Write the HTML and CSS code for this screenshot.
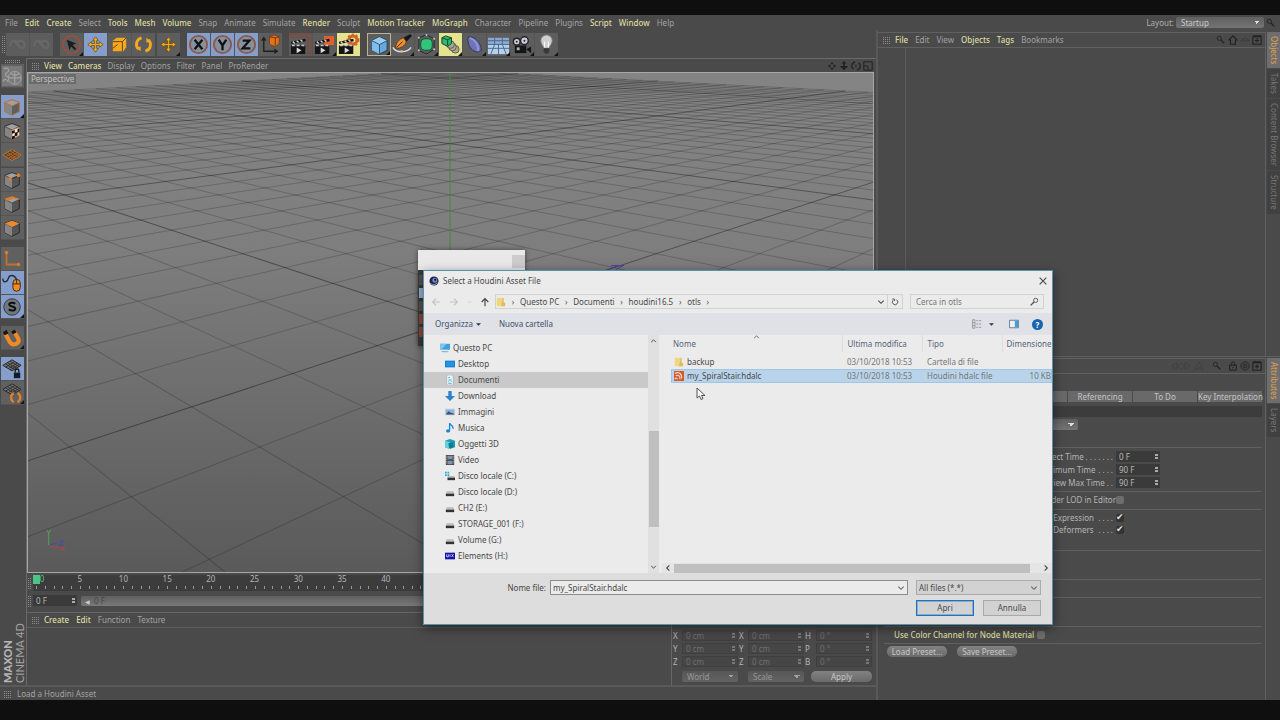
FILE: index.html
```html
<!DOCTYPE html>
<html lang="en">
<head>
<meta charset="utf-8">
<title>Cinema 4D</title>
<link rel="stylesheet" href="styles.css">
</head>
<body>
<svg class="defs" aria-hidden="true">
  <defs>
    <symbol id="i-undo" viewBox="0 0 24 24"><path d="M5 14a4 4 0 1 1 7 0M8 8l8 8M12 10a4 4 0 1 1 4 6" fill="none" stroke="#696969" stroke-width="2"/></symbol>
    <symbol id="i-select" viewBox="0 0 24 24"><circle cx="12" cy="12" r="9" fill="none" stroke="#9a4f3c" stroke-width="2"/><path d="M7 7l10 4-4 1.500 4 4-1.500 1.500-4-4L10 18z" fill="#1c1c1c"/></symbol>
    <symbol id="i-move" viewBox="0 0 24 24"><path d="M12 4l3 4h-2v3h3V9l4 3-4 3v-2h-3v3h2l-3 4-3-4h2v-3H8v2l-4-3 4-3v2h3V8H9z" fill="#f2a91f" stroke="#5a4110" stroke-width=".7"/></symbol>
    <symbol id="i-scale" viewBox="0 0 24 24"><path d="M5 8l4-3h10v10l-3 4H5z" fill="#f4a81d"/><path d="M5 9h10v10M15 9l4-4M5 16l5-4" fill="none" stroke="#60430d"/></symbol>
    <symbol id="i-rotate" viewBox="0 0 24 24"><path d="M10 5a7 7 0 0 0-3 12M14 19a7 7 0 0 0 3-12" fill="none" stroke="#f2a91f" stroke-width="3"/><path d="M4 15l5-1v5zM20 9l-5 1V5z" fill="#f2a91f"/></symbol>
    <symbol id="i-x" viewBox="0 0 24 24"><circle cx="12" cy="12" r="9" fill="#87909f" stroke="#8a5b4c" stroke-width="2"/><path d="M8 7l8 10M16 7L8 17" stroke="#111" stroke-width="2.4"/></symbol>
    <symbol id="i-y" viewBox="0 0 24 24"><circle cx="12" cy="12" r="9" fill="#87909f" stroke="#8a5b4c" stroke-width="2"/><path d="M8 7l4 6 4-6M12 12v6" stroke="#111" stroke-width="2.4" fill="none"/></symbol>
    <symbol id="i-z" viewBox="0 0 24 24"><circle cx="12" cy="12" r="9" fill="#87909f" stroke="#8a5b4c" stroke-width="2"/><path d="M8 8h7l-7 8h8" stroke="#111" stroke-width="2.4" fill="none"/></symbol>
    <symbol id="i-axis" viewBox="0 0 24 24"><path d="M5 6v13h13M3 8l2-3 2 3M16 17l3 2-3 2" fill="none" stroke="#1f1f1f" stroke-width="1.4"/><path d="M11 4l5-2 5 2v7l-4 3-6-2z" fill="#e27418" stroke="#6b3510" stroke-width=".7"/><path d="M11 4l6 1 4-1M17 5v8" stroke="#6b3510" fill="none"/></symbol>
    <symbol id="i-clap" viewBox="0 0 24 24"><path d="M2 13h15v9H2zM2 9l15-3 .5 2.500-15 3z" fill="#151515"/><path d="M4 9l2 2M8 8l2 2M12 7l2 2M3 13h3M8 13h3M13 13h3" stroke="#ccc" stroke-width="1.500"/><path d="M8 15l5 3-5 3z" fill="#ddd"/></symbol>
    <symbol id="i-cube3d" viewBox="0 0 24 24"><path d="M12 3l8 4v10l-8 4-8-4V7z" fill="#68a8dc" stroke="#1d3b58"/><path d="M4 7l8 4v10l-8-4z" fill="#82bdea"/><path d="M4 7l8-4 8 4-8 4z" fill="#9accee"/><path d="M4 7l8 4 8-4M12 11v10" stroke="#1d3b58" fill="none" stroke-width=".8"/></symbol>
    <symbol id="i-pen" viewBox="0 0 24 24"><path d="M13 5l7-4 2 2-6 6z" fill="#191919"/><path d="M5 15c0-5 4-9 8-10l3 4c-1 4-6 7-10 7z" fill="#ef9132" stroke="#5a2c0b" stroke-width=".8"/><path d="M6 15l6-6" stroke="#401f08"/><path d="M2 15c3 6 15 6 19 0" fill="none" stroke="#ddd" stroke-width="1.500"/><circle cx="11" cy="19" r="1.200" fill="#f0c040"/></symbol>
    <symbol id="i-nurbs" viewBox="0 0 24 24"><path d="M4 5l8-3 8 4v11l-8 5-8-4z" fill="none" stroke="#282828"/><rect x="6" y="6" width="12" height="12" rx="4" fill="#31c47a" stroke="#115232"/><g fill="#ccc"><circle cx="4" cy="5" r="1"/><circle cx="12" cy="2" r="1"/><circle cx="20" cy="6" r="1"/><circle cx="4" cy="18" r="1"/><circle cx="20" cy="17" r="1"/></g></symbol>
    <symbol id="i-array" viewBox="0 0 24 24"><g fill="#a9a98e" stroke="#5b5b50"><circle cx="17" cy="17" r="4"/><circle cx="14" cy="14.500" r="4"/><circle cx="12" cy="12" r="4"/></g><path d="M3 5l4-2 6 2v6l-4 3-6-3z" fill="#2fb873" stroke="#0d4427"/><path d="M3 5l6 2 4-2M9 7v6" stroke="#0d4427" fill="none"/></symbol>
    <symbol id="i-deform" viewBox="0 0 24 24"><path d="M6 4c8 0 13 7 13 14l-4 2C8 19 5 12 5 6z" fill="#6f74b8" stroke="#30335e"/><path d="M7 5c6 2 9 8 9 14" stroke="#9297d8" stroke-width="2" fill="none"/></symbol>
    <symbol id="i-floor" viewBox="0 0 24 24"><path d="M1 5h22v17H1z" fill="#8ca6cc"/><path d="M1 12h22v10H1z" fill="#b6d0ea"/><path d="M1 12h22M1 16h22M8 12L4 22M12 12v10M16 12l4 10M8 5v7M16 5v7M1 8h22" stroke="#49688f"/></symbol>
    <symbol id="i-cam" viewBox="0 0 24 24"><rect x="4" y="13" width="12" height="8" fill="#151515"/><path d="M16 17l5-3v7z" fill="#151515"/><circle cx="6" cy="9" r="3.500" fill="#ccd" stroke="#222" stroke-width="1.500"/><circle cx="14" cy="8" r="4" fill="#ccd" stroke="#222" stroke-width="1.500"/><circle cx="14" cy="8" r="1" fill="#222"/><circle cx="6" cy="9" r="1" fill="#222"/><path d="M6 15h3v3H6z" fill="#9bb"/></symbol>
    <symbol id="i-light" viewBox="0 0 24 24"><path d="M9 16c0-3-3-4-3-8a6 6 0 0 1 12 0c0 4-3 5-3 8z" fill="#cfcfcf" stroke="#777"/><path d="M9 16h6v4l-3 2-3-2z" fill="#393939"/><path d="M10 15V9M14 15V9" stroke="#fff"/></symbol>
    <symbol id="i-globe" viewBox="0 0 24 24"><path d="M1 1h22v22H1z" fill="#7a7a7a"/><circle cx="15" cy="14" r="7" fill="none" stroke="#a5a5a5"/><path d="M8 14h14M15 7v14M10 9c4 3 7 3 10 0M3 4c5-2 7 2 4 4s-3 4 1 5M2 18c2-4 5-2 6 1" fill="none" stroke="#a2a2a2" stroke-width="1.300"/></symbol>
    <symbol id="i-model" viewBox="0 0 24 24"><path d="M12 4l8 3v10l-8 4-8-4V7z" fill="#5f5f5f" stroke="#c06d2d"/><path d="M4 7l8 4v10l-8-4z" fill="#858585"/><path d="M4 7l8-3 8 3-8 4z" fill="#a0a0a0" stroke="#c06d2d" stroke-width=".8"/></symbol>
    <symbol id="i-grey" viewBox="0 0 24 24"><path d="M12 4l8 3v10l-8 4-8-4V7z" fill="#555" stroke="#252525"/><path d="M4 7l8 4v10l-8-4z" fill="#858585"/><path d="M4 7l8-3 8 3-8 4z" fill="#a0a0a0" stroke="#333" stroke-width=".7"/></symbol>
    <symbol id="i-check" viewBox="0 0 24 24"><use href="#i-grey"/><path d="M12 11l8-3v9l-8 4z" fill="#eee" stroke="#cf7b35"/><path d="M12 12l3-1v3l-3 1zM15 14l3-1v-3l2-1v4l-2 1v3l-3 1zM12 18l3-1v3l-3 1z" fill="#111"/></symbol>
    <symbol id="i-mesh" viewBox="0 0 24 24"><path d="M2 12l10-6 10 6-10 6z" fill="#4d3a28" stroke="#c9762c"/><path d="M5 10.500l10 6M7 9l10 6M10 7.500l10 6M5 14l10-6M8 15.500l10-6M10 17l10-6" stroke="#c9762c" stroke-width=".8"/></symbol>
    <symbol id="i-mesh2" viewBox="0 0 24 24"><path d="M2 8l10-6 10 6-10 6z" fill="#777" stroke="#252525"/><path d="M5 6.500l10 6M7 5l10 6M10 3.500l10 6M5 10l10-6M8 11.500l10-6M10 13l10-6" stroke="#252525" stroke-width=".9"/></symbol>
    <symbol id="i-point" viewBox="0 0 24 24"><use href="#i-grey"/><path d="M10 11l10-4" stroke="#222"/><g fill="#e17d25"><circle cx="10" cy="11" r="2"/><circle cx="19" cy="7" r="2"/></g></symbol>
    <symbol id="i-edge" viewBox="0 0 24 24"><use href="#i-grey"/><path d="M4 7l8-3 8 3M6 8l8-3" stroke="#e17d25" fill="none" stroke-width="1.500"/></symbol>
    <symbol id="i-poly" viewBox="0 0 24 24"><use href="#i-grey"/><path d="M4 7l8-3 8 3-8 4z" fill="#ef8a2b"/></symbol>
    <symbol id="i-l" viewBox="0 0 24 24"><path d="M6 5v13h13" stroke="#c66f2b" stroke-width="2" fill="none"/><circle cx="6" cy="5" r="2" fill="#d37a31"/><circle cx="19" cy="18" r="2" fill="#d37a31"/></symbol>
    <symbol id="i-mouse" viewBox="0 0 24 24"><rect x="13" y="8" width="8" height="13" rx="4" fill="#f08a22" stroke="#3b2610"/><path d="M13 13h8M17 8v5" stroke="#3b2610"/><path d="M2 7c0 6 5 4 6 0s6-5 9 1" fill="none" stroke="#262e38" stroke-width="1.500"/></symbol>
    <symbol id="i-s" viewBox="0 0 24 24"><circle cx="12" cy="12" r="9" fill="#717780" stroke="#333"/><path d="M15.500 8.500c-2-2-7-1.500-6.500 1 .5 2.500 7 1.500 6.500 4.500-.4 2.500-5 2.500-7 .5" fill="none" stroke="#111" stroke-width="2.200"/></symbol>
    <symbol id="i-magnet" viewBox="0 0 24 24"><path d="M5 8l5 9c3 4 11 1 9-4l-4-7" fill="none" stroke="#f08a22" stroke-width="4.500"/><path d="M2 6l4-3 2 4-4 2zM11 5l4-2 2 3-4 2z" fill="#161616"/></symbol>
    <symbol id="i-lock" viewBox="0 0 24 24"><use href="#i-mesh2"/><path d="M14 16h7v6h-7z" fill="#141b28"/><path d="M15.500 16v-2a2 2 0 0 1 4 0v2" fill="none" stroke="#141b28" stroke-width="1.400"/></symbol>
    <symbol id="i-ring" viewBox="0 0 24 24"><use href="#i-mesh2"/><path d="M14 12c-4 2-4 8 0 10M18 12c4 2 4 8 0 10" fill="none" stroke="#e3812d" stroke-width="2.500"/></symbol>
    <symbol id="i-lens" viewBox="0 0 12 12"><circle cx="4" cy="4" r="2.500" fill="none" stroke="currentColor"/><path d="M6 6l4 4" stroke="currentColor" stroke-width="1.500"/></symbol>
    <symbol id="i-home" viewBox="0 0 12 12"><path d="M1 6l5-5 5 5H9v5H3V6z" fill="none" stroke="currentColor" stroke-width="1.300"/></symbol>
    <symbol id="i-eye" viewBox="0 0 12 12"><path d="M1 7c3-4 7-4 10 0z" fill="none" stroke="currentColor" opacity=".4"/></symbol>
    <symbol id="i-cone" viewBox="0 0 12 12"><path d="M6 1l5 10-5-3-5 3z" fill="none" stroke="currentColor"/></symbol>
    <symbol id="i-look" viewBox="0 0 24 12"><path d="M1 6l6-4v8zM23 6l-6-4v8zM8 6c2-4 6-4 8 0-2 4-6 4-8 0z" fill="none" stroke="currentColor"/></symbol>
    <symbol id="i-plus" viewBox="0 0 12 12"><path d="M1 2h10v9H1zM1 1h10M6 4v5M3.500 6.500h5" fill="none" stroke="currentColor" stroke-width="1.300"/></symbol>
    <symbol id="i-pan" viewBox="0 0 12 12"><path d="M6 1l2 3H4zM6 11l2-3H4zM1 6l3-2v4zM11 6L8 4v4z" fill="currentColor"/></symbol>
    <symbol id="i-zoomv" viewBox="0 0 12 12"><path d="M6 0l3 3H7v3h4L6 11 1 6h4V3H3z" fill="currentColor"/></symbol>
    <symbol id="i-orbit" viewBox="0 0 12 12"><path d="M5 1a5 5 0 0 0-2 9M7 11a5 5 0 0 0 2-9" fill="none" stroke="currentColor" stroke-width="1.500"/><path d="M6 4v4" stroke="currentColor"/></symbol>
    <symbol id="i-quad" viewBox="0 0 12 12"><path d="M1 1h10v10H1zM1 6h5v5" fill="none" stroke="currentColor" stroke-width="1.200"/></symbol>
    <symbol id="i-padlock" viewBox="0 0 12 12"><path d="M2 5h8v6H2zM4 5V3a2 2 0 0 1 4 0v2M6 7v2" fill="none" stroke="currentColor" stroke-width="1.200"/></symbol>
    <symbol id="i-target" viewBox="0 0 12 12"><circle cx="6" cy="6" r="5" fill="none" stroke="currentColor"/><circle cx="6" cy="6" r="2.500" fill="none" stroke="currentColor"/><circle cx="6" cy="6" r="1" fill="currentColor"/></symbol>
    <symbol id="i-folder" viewBox="0 0 12 12"><path d="M1 1h8v10H1z" fill="#f0d67c"/><path d="M8 1h1v6h2v4H6z" fill="#dcbd5c"/></symbol>
    <symbol id="i-pc" viewBox="0 0 12 12"><path d="M0 1h12v7H0z" fill="#3fa0dc"/><path d="M0 1h8L2 8H0z" fill="#7cc4ee"/><path d="M2 10h8v1H2z" fill="#6a9ab5"/></symbol>
    <symbol id="i-desktop" viewBox="0 0 12 12"><path d="M0 2h12v8H0z" fill="#1778c6"/><path d="M1 3h10v6H1z" fill="#1e96e6"/></symbol>
    <symbol id="i-doc" viewBox="0 0 12 12"><path d="M2 0h6l2 2v10H2z" fill="#eef5f8" stroke="#8aa3ad" stroke-width=".7"/><path d="M4 3h2M4 6h4M4 8h1M7 8h1M4 10h4" stroke="#38a0c8"/></symbol>
    <symbol id="i-down" viewBox="0 0 12 12"><path d="M4 0h4v6h4l-6 6-6-6h4z" fill="#2f83cc"/></symbol>
    <symbol id="i-pic" viewBox="0 0 12 12"><path d="M0 2h12v8H0z" fill="#c5d3de"/><path d="M1 3h10v6H1z" fill="#8fb6d8"/><path d="M1 9l3-4 3 2 4 1v1z" fill="#34527a"/></symbol>
    <symbol id="i-music" viewBox="0 0 12 12"><path d="M5.500 0c1 3 5 3 4 7M5.500 0v9" stroke="#1687d3" fill="none" stroke-width="1.500"/><ellipse cx="3.700" cy="9.500" rx="2.500" ry="2" fill="#1687d3"/></symbol>
    <symbol id="i-3d" viewBox="0 0 12 12"><path d="M0 2l6-2 6 2v8l-6 2-6-2z" fill="#1aa0b4"/><path d="M0 2l6 2v8l-6-2z" fill="#63d0de"/><path d="M4 5l6-1v6l-5 1z" fill="#117a92"/></symbol>
    <symbol id="i-video" viewBox="0 0 12 12"><path d="M1 0h10v12H1z" fill="#444"/><path d="M3 1h6v4H3zM3 7h6v4H3z" fill="#7f93ac"/><path d="M2 1v10M10 1v10" stroke="#ccc" stroke-dasharray="1 1"/></symbol>
    <symbol id="i-disk" viewBox="0 0 12 12"><path d="M2 5h8l1 3H1z" fill="#bbb"/><path d="M1 8h10v3H1z" fill="#333"/></symbol>
    <symbol id="i-diskc" viewBox="0 0 12 12"><path d="M3 6h8l1 2H3z" fill="#bbb"/><path d="M3 8h9v3H3z" fill="#333"/><path d="M0 1h2v2H0zM3 1h2v2H3zM0 4h2v2H0zM3 4h2v2H3z" fill="#21a8dc"/></symbol>
    <symbol id="i-wd" viewBox="0 0 12 12"><path d="M0 2h12v8H0z" fill="#1414a6"/><path d="M2 4v3h2V4M6 4v3M8 4l2 3M10 4L8 7" stroke="#dcdcff" fill="none"/></symbol>
    <symbol id="i-houdini" viewBox="0 0 12 12"><path d="M0 0h12v12H0z" fill="#d9592b"/><path d="M1 3c5-3 9 1 8 6M2 6c3-2 6 0 5 4M1 10c0-2 3-2 3 0" fill="none" stroke="#f4d6c8" stroke-width="1.300"/></symbol>
    <symbol id="i-c4d" viewBox="0 0 12 12"><circle cx="6" cy="6" r="5.500" fill="#20264f"/><circle cx="7" cy="5" r="3" fill="#7183b8"/><circle cx="7.500" cy="4.500" r="1.300" fill="#10132c"/><path d="M1 8c2 3 7 3 9 0" stroke="#aeb9d9" fill="none"/></symbol>
    <symbol id="i-chev" viewBox="0 0 12 12"><path d="M2 4l4 4 4-4" fill="none" stroke="currentColor" stroke-width="1.600"/></symbol>
    <symbol id="i-tri" viewBox="0 0 12 12"><path d="M0 3h12L6 9z" fill="currentColor"/></symbol>
    <symbol id="i-back" viewBox="0 0 12 12"><path d="M11 6H2M6 2L2 6l4 4" fill="none" stroke="currentColor" stroke-width="1.400"/></symbol>
    <symbol id="i-refresh" viewBox="0 0 12 12"><path d="M8 2.500a4 4 0 1 1-5 1M2 1.500h3v3" fill="none" stroke="currentColor" stroke-width="1.400"/></symbol>
    <symbol id="i-close" viewBox="0 0 12 12"><path d="M2 2l8 8M10 2l-8 8" stroke="currentColor" stroke-width="1.300"/></symbol>
    <symbol id="i-list" viewBox="0 0 12 12"><path d="M.5 1h3v10h-3zM.5 4.500h3M.5 8h3M5 2h2M8 2h3M5 6h2M8 6h3M5 10h2M8 10h3" fill="none" stroke="#8a8d93"/></symbol>
    <symbol id="i-pane" viewBox="0 0 12 12"><path d="M.5 1.500h11v9H.5z" fill="#eee" stroke="#4c6b8c"/><path d="M7 2h4v8H7z" fill="#4f9bd8"/></symbol>
  </defs>
</svg>

<main class="app">
  <header class="menubar">
    <nav class="menu">
      <button>File</button><button class="on">Edit</button><button class="on">Create</button><button>Select</button><button class="on">Tools</button><button class="on">Mesh</button><button class="on">Volume</button><button>Snap</button><button>Animate</button><button>Simulate</button><button class="on">Render</button><button>Sculpt</button><button class="on">Motion Tracker</button><button class="on">MoGraph</button><button>Character</button><button>Pipeline</button><button>Plugins</button><button class="on">Script</button><button class="on">Window</button><button>Help</button>
    </nav>
    <div class="layout-pick">
      <label for="layout">Layout:</label>
      <select id="layout" class="combo"><option>Startup</option></select>
      <svg class="ic"><use href="#i-lens"/></svg>
    </div>
  </header>

  <div class="main">
    <section class="left">
      <div class="toolbar">
        <span class="grip tall"></span>
        <div class="group"><button aria-label="Undo"><svg><use href="#i-undo"/></svg></button><button aria-label="Redo"><svg><use href="#i-undo"/></svg></button></div>
        <div class="group"><button class="more" aria-label="Live selection"><svg><use href="#i-select"/></svg></button><button class="sel" aria-label="Move"><svg><use href="#i-move"/></svg></button><button aria-label="Scale"><svg><use href="#i-scale"/></svg></button><button aria-label="Rotate"><svg><use href="#i-rotate"/></svg></button></div>
        <div class="group near"><button class="more" aria-label="Last tool"><svg><use href="#i-move"/></svg></button></div>
        <div class="group"><button class="sel" aria-label="X axis"><svg><use href="#i-x"/></svg></button><button class="sel" aria-label="Y axis"><svg><use href="#i-y"/></svg></button><button class="sel" aria-label="Z axis"><svg><use href="#i-z"/></svg></button><button aria-label="Coordinate system"><svg><use href="#i-axis"/></svg></button></div>
        <div class="group"><button aria-label="Render view"><svg><path d="M1 1h21v20h-3V4H1z" fill="none" stroke="#8b4335"/><use href="#i-clap"/></svg></button><button class="more" aria-label="Render to picture viewer"><svg><path d="M11 3h10v9H11z" fill="#e2602c"/><use href="#i-clap"/></svg></button><button class="yel" aria-label="Render settings"><svg><circle cx="16" cy="7" r="4" fill="none" stroke="#cf6328" stroke-width="3"/><circle cx="16" cy="7" r="5.500" fill="none" stroke="#cf6328" stroke-width="2" stroke-dasharray="2 2"/><use href="#i-clap"/></svg></button></div>
        <div class="group"><button class="more framed" aria-label="Cube"><svg><use href="#i-cube3d"/></svg></button><button class="more" aria-label="Pen"><svg><use href="#i-pen"/></svg></button><button class="more" aria-label="Subdivision surface"><svg><use href="#i-nurbs"/></svg></button><button class="more yel" aria-label="Array"><svg><use href="#i-array"/></svg></button><button class="more" aria-label="Bend"><svg><use href="#i-deform"/></svg></button><button class="more" aria-label="Floor"><svg><use href="#i-floor"/></svg></button><button class="more" aria-label="Camera"><svg><use href="#i-cam"/></svg></button><button class="more" aria-label="Light"><svg><use href="#i-light"/></svg></button></div>
      </div>

      <div class="work">
        <aside class="palette">
          <span class="grip wide"></span>
          <div class="vgroup"><button aria-label="Make editable"><svg><use href="#i-globe"/></svg></button></div>
          <div class="vgroup gap-l"><button class="sel more" aria-label="Model"><svg><use href="#i-model"/></svg></button><button aria-label="Texture"><svg><use href="#i-check"/></svg></button><button aria-label="Workplane"><svg><use href="#i-mesh"/></svg></button></div>
          <div class="vgroup gap-s"><button aria-label="Points"><svg><use href="#i-point"/></svg></button><button aria-label="Edges"><svg><use href="#i-edge"/></svg></button><button aria-label="Polygons"><svg><use href="#i-poly"/></svg></button></div>
          <div class="vgroup gap-l"><button aria-label="Axis"><svg><use href="#i-l"/></svg></button><button class="sel" aria-label="Tweak"><svg><use href="#i-mouse"/></svg></button><button class="sel more" aria-label="Viewport solo"><svg><use href="#i-s"/></svg></button></div>
          <div class="vgroup gap-l"><button class="more" aria-label="Snap"><svg><use href="#i-magnet"/></svg></button></div>
          <div class="vgroup gap-l"><button class="sel" aria-label="Lock workplane"><svg><use href="#i-lock"/></svg></button><button class="more" aria-label="Planar workplane"><svg><use href="#i-ring"/></svg></button></div>
          <div class="brand"><b>MAXON</b><span>CINEMA 4D</span></div>
        </aside>

        <div class="center">
          <div class="bar view-bar">
            <span class="grip"></span>
            <nav class="menu"><button class="on">View</button><button class="on">Cameras</button><button>Display</button><button>Options</button><button>Filter</button><button>Panel</button><button>ProRender</button></nav>
            <div class="icons"><svg class="ic"><use href="#i-pan"/></svg><svg class="ic"><use href="#i-zoomv"/></svg><svg class="ic"><use href="#i-orbit"/></svg><svg class="ic"><use href="#i-quad"/></svg></div>
          </div>
          <div class="viewport">
            <svg class="scene" viewBox="0 0 846 498" preserveAspectRatio="xMidYMin slice">
              <g id="grid"></g>
              <path d="M422.500 0v300" stroke="#478547"/>
              <path d="M576 198l14-6M583 192h13l-8 4" stroke="#4444a8" fill="none"/>
              <g fill="none"><path d="M22 471v-13" stroke="#4aa552"/><path d="M20 456l2 3 2-3" stroke="#4aa552"/><path d="M23 471l8-2M33 467h4l-4 4h4" stroke="#4a4aa8"/><path d="M23 472l9 2M34 473l4 4M38 473l-4 4" stroke="#b04545"/></g>
            </svg>
            <span class="view-name">Perspective</span>
          </div>
          <div class="timeline"><span class="grip"></span>
            <div class="ruler"><i class="playhead"></i><div class="marks" id="marks"></div></div>
          </div>
          <div class="range"><span class="grip"></span>
            <span class="spin"><input aria-label="Start frame" value="0 F"></span>
            <div class="slider"><i>◀</i>0 F</div>
          </div>
          <div class="lower">
            <div class="materials">
              <div class="bar"><span class="grip"></span><nav class="menu"><button class="on">Create</button><button class="on">Edit</button><button>Function</button><button>Texture</button></nav></div>
            </div>
            <div class="coords">
              <label for="px">X</label><span class="spin"><input id="px" value="0 cm"></span><label for="sx">X</label><span class="spin"><input id="sx" value="0 cm"></span><label for="rh">H</label><span class="spin"><input id="rh" value="0 °"></span>
              <label for="py">Y</label><span class="spin"><input id="py" value="0 cm"></span><label for="sy">Y</label><span class="spin"><input id="sy" value="0 cm"></span><label for="rp">P</label><span class="spin"><input id="rp" value="0 °"></span>
              <label for="pz">Z</label><span class="spin"><input id="pz" value="0 cm"></span><label for="sz">Z</label><span class="spin"><input id="sz" value="0 cm"></span><label for="rb">B</label><span class="spin"><input id="rb" value="0 °"></span>
              <select class="combo c2" aria-label="Space"><option>World</option></select><select class="combo c4" aria-label="Size mode"><option>Scale</option></select><button class="pill c6">Apply</button>
            </div>
          </div>
        </div>
      </div>
      <footer class="status"><span class="grip"></span>Load a Houdini Asset</footer>
    </section>

    <section class="right">
      <div class="pane objects">
        <div class="pane-main">
          <div class="bar"><span class="grip"></span><nav class="menu"><button class="on">File</button><button>Edit</button><button>View</button><button class="on">Objects</button><button class="on">Tags</button><button>Bookmarks</button></nav>
            <div class="icons"><svg class="ic"><use href="#i-lens"/></svg><svg class="ic"><use href="#i-home"/></svg><svg class="ic"><use href="#i-eye"/></svg><svg class="ic"><use href="#i-plus"/></svg></div></div>
          <div class="tree-area"></div>
        </div>
        <div class="vtabs"><button class="cur">Objects</button><button>Takes</button><button>Content Browser</button><button>Structure</button></div>
      </div>
      <div class="pane attrs">
        <div class="pane-main">
          <div class="bar"><div class="icons"><svg class="ic look faint"><use href="#i-look"/></svg><svg class="ic faint cone"><use href="#i-cone"/></svg><svg class="ic"><use href="#i-lens"/></svg><svg class="ic lockic"><use href="#i-padlock"/></svg><svg class="ic"><use href="#i-target"/></svg><svg class="ic"><use href="#i-plus"/></svg></div></div>
          <div class="tabs"><button>Dynamics</button><button>Referencing</button><button>To Do</button><button>Key Interpolation</button></div>
          <div class="strip"></div>
          <div class="unit"><select class="combo" aria-label="Unit"><option>Centimeters</option></select></div>
          <div class="sect fields">
            <label for="t1"><span>Project Time</span></label><span class="spin"><input id="t1" value="0 F"></span>
            <label for="t2"><span>Maximum Time</span></label><span class="spin"><input id="t2" value="90 F"></span>
            <label for="t3"><span>Preview Max Time</span></label><span class="spin"><input id="t3" value="90 F"></span>
          </div>
          <div class="sect lod fields"><label for="k1"><span>Render LOD in Editor</span></label><input type="checkbox" id="k1"></div>
          <div class="sect uses fields"><label for="k2"><span>Use Expression</span></label><input type="checkbox" id="k2" checked><label for="k3"><span>Use Deformers</span></label><input type="checkbox" id="k3" checked></div>
          <div class="sect s1"></div><div class="sect s2"></div><div class="sect s1"></div>
          <div class="sect node"><label class="on" for="k4">Use Color Channel for Node Material</label><input type="checkbox" id="k4"></div>
          <div class="sect presets"><button class="pill">Load Preset...</button><button class="pill">Save Preset...</button></div>
        </div>
        <div class="vtabs"><button class="cur">Attributes</button><button>Layers</button></div>
      </div>
    </section>
  </div>
</main>

<div class="mini"><div class="mini-title"><span></span></div><div class="mini-body"><i></i><i class="lit"></i><i></i><i class="red"></i><i class="red"></i></div></div>

<div class="dialog" role="dialog" aria-label="Select a Houdini Asset File">
  <div class="d-title"><svg class="ic"><use href="#i-c4d"/></svg><span>Select a Houdini Asset File</span><button aria-label="Close"><svg class="ic"><use href="#i-close"/></svg></button></div>
  <div class="d-nav">
    <div class="arrows"><svg class="ic off"><use href="#i-back"/></svg><svg class="ic off flip"><use href="#i-back"/></svg><svg class="ic off tiny"><use href="#i-chev"/></svg><svg class="ic up"><use href="#i-back"/></svg></div>
    <div class="path"><svg class="ic"><use href="#i-folder"/></svg><i>›</i><a href="#">Questo PC</a><i>›</i><a href="#">Documenti</a><i>›</i><a href="#">houdini16.5</a><i>›</i><a href="#">otls</a><i>›</i><svg class="ic drop"><use href="#i-chev"/></svg><button aria-label="Refresh"><svg class="ic"><use href="#i-refresh"/></svg></button></div>
    <div class="search"><input type="text" placeholder="Cerca in otls" aria-label="Cerca in otls"><svg class="ic mirror"><use href="#i-lens"/></svg></div>
  </div>
  <div class="d-tools"><button class="org">Organizza<svg class="tri"><use href="#i-tri"/></svg></button><button>Nuova cartella</button><span class="grow"></span><svg class="ic wide-ic"><use href="#i-list"/></svg><svg class="tri"><use href="#i-tri"/></svg><svg class="ic pane-ic"><use href="#i-pane"/></svg><button class="help" aria-label="Help">?</button></div>
  <div class="d-body">
    <ul class="nav-tree">
      <li class="root"><svg class="ic"><use href="#i-pc"/></svg>Questo PC</li>
      <li><svg class="ic"><use href="#i-desktop"/></svg>Desktop</li>
      <li class="cur"><svg class="ic"><use href="#i-doc"/></svg>Documenti</li>
      <li><svg class="ic"><use href="#i-down"/></svg>Download</li>
      <li><svg class="ic"><use href="#i-pic"/></svg>Immagini</li>
      <li><svg class="ic"><use href="#i-music"/></svg>Musica</li>
      <li><svg class="ic"><use href="#i-3d"/></svg>Oggetti 3D</li>
      <li><svg class="ic"><use href="#i-video"/></svg>Video</li>
      <li><svg class="ic"><use href="#i-diskc"/></svg>Disco locale (C:)</li>
      <li><svg class="ic"><use href="#i-disk"/></svg>Disco locale (D:)</li>
      <li><svg class="ic"><use href="#i-disk"/></svg>CH2 (E:)</li>
      <li><svg class="ic"><use href="#i-disk"/></svg>STORAGE_001 (F:)</li>
      <li><svg class="ic"><use href="#i-disk"/></svg>Volume (G:)</li>
      <li><svg class="ic"><use href="#i-wd"/></svg>Elements (H:)</li>
    </ul>
    <div class="vscroll"><svg class="ic up-chev"><use href="#i-chev"/></svg><div class="track"><i></i></div><svg class="ic"><use href="#i-chev"/></svg></div>
    <div class="files">
      <table>
        <colgroup><col class="w-name"><col class="w-date"><col class="w-type"><col class="w-size"></colgroup>
        <thead><tr><th>Nome<svg class="ic sort"><use href="#i-chev"/></svg></th><th>Ultima modifica</th><th>Tipo</th><th>Dimensione</th></tr></thead>
        <tbody>
          <tr><td><svg class="ic"><use href="#i-folder"/></svg>backup</td><td>03/10/2018 10:53</td><td>Cartella di file</td><td></td></tr>
          <tr class="cur"><td><svg class="ic"><use href="#i-houdini"/></svg>my_SpiralStair.hdalc</td><td>03/10/2018 10:53</td><td>Houdini hdalc file</td><td>10 KB</td></tr>
        </tbody>
      </table>
      <div class="hscroll"><svg class="ic l"><use href="#i-chev"/></svg><div class="track"><i></i></div><svg class="ic r"><use href="#i-chev"/></svg></div>
    </div>
  </div>
  <div class="d-foot">
    <label for="fname">Nome file:</label>
    <span class="fname"><input type="text" id="fname" value="my_SpiralStair.hdalc"><svg class="ic"><use href="#i-chev"/></svg></span>
    <span class="ftype"><select aria-label="File type"><option>All files (*.*)</option></select><svg class="ic"><use href="#i-chev"/></svg></span>
    <div class="d-btns"><button class="primary">Apri</button><button>Annulla</button></div>
  </div>
  <i class="resize"></i>
  <svg class="cursor" viewBox="0 0 10 14"><path d="M1 1v10l2.500-2 1.500 3.500 2-1-1.500-3H9z" fill="#f6f6f6" stroke="#444" stroke-width=".9"/></svg>
</div>
<script src="script.js"></script>
</body>
</html>
```
FILE: styles.css
```css
* { box-sizing: border-box; }
html, body { height: 100%; }
body {
  margin: 0;
  padding: 15px 0 20px;
  background: #0f0f0f;
  font: 8px/12px "Noto Sans", "Open Sans", sans-serif;
  color: #a2a2a2;
  overflow: hidden;
  position: relative;
}
.defs { position: absolute; width: 0; height: 0; }
button, input, select { font: inherit; color: inherit; margin: 0; padding: 0; border: 0; background: none; border-radius: 0; outline: 0; }
svg { display: block; }
i { font-style: normal; }
.ic { width: 10px; height: 10px; flex: none; }
.on { color: #dcdca0; font-weight: 500; }

.app { height: 100%; background: #4a4a4a; display: flex; flex-direction: column; }
.menubar { height: 15px; flex: none; display: flex; justify-content: space-between; align-items: center; }
.menu { display: flex; gap: 7px; white-space: nowrap; }
.menubar .menu { padding-left: 5px; }
.layout-pick { display: flex; align-items: center; gap: 2px; padding-right: 4px; color: #b0b0b0; }
.layout-pick .ic { color: #222; }
.combo {
  appearance: none; height: 11px; width: 88px; padding: 0 5px; color: #c8c8c8; line-height: 11px;
  background: linear-gradient(45deg, transparent 50%, #ddd 50%) right 7px center / 3px 3px no-repeat,
    linear-gradient(-45deg, transparent 50%, #ddd 50%) right 4px center / 3px 3px no-repeat,
    linear-gradient(#606060, #747474);
  border-radius: 2px;
}

.main { flex: 1; display: flex; min-height: 0; }
.left { flex: 1; min-width: 0; display: flex; flex-direction: column; }

.toolbar { height: 28px; flex: none; display: flex; align-items: center; padding-left: 1px; }
.grip {
  width: 8px; height: 8px; flex: none; background-color: #8c8c8c;
  background-image: linear-gradient(#4a4a4a 1px, transparent 1px), linear-gradient(90deg, #4a4a4a 1px, transparent 1px);
  background-size: 2px 2px;
}
.grip.tall { width: 4px; height: 18px; }
.grip.wide { width: 17px; height: 4px; margin: 1px 0 1px 3px; }
.group { display: flex; margin-left: 7px; background: #5d5d5d; }
.grip + .group { margin-left: 1px; }
.group.near { margin-left: 2px; }
.group button, .vgroup button { width: 24px; height: 23px; position: relative; border-right: 1px solid #555; }
.group button:last-child { width: 23px; border-right: 0; }
.group button svg { width: 23px; height: 23px; }
.vgroup button { width: 23px; height: 24px; display: block; border: 0; border-bottom: 1px solid #555; }
.vgroup svg { width: 22px; height: 22px; }
.toolbar .sel, .palette .sel { background: #869ecb; }
.toolbar .yel { background: #e6e38f; }
.toolbar .framed { border: 1px solid #b9b38f; }
.more::after { content: ""; position: absolute; right: 0; bottom: 0; border: 2px solid; border-color: transparent #151515 #151515 transparent; }

.work { flex: 1; display: flex; min-height: 0; }
.palette { width: 26px; padding-left: 1px; display: flex; flex-direction: column; }
.vgroup { width: 23px; background: #606060; }
.gap-l { margin-top: 7px; }
.gap-s { margin-top: 1px; }
.brand { margin-top: auto; writing-mode: vertical-rl; transform: rotate(180deg); display: flex; flex-direction: column; align-self: center; font: 11px/12px Lato, sans-serif; color: #a5a5a5; white-space: nowrap; padding-top: 2px; }
.brand b { font-weight: 900; color: #b4b4b4; }

.center { flex: 1; min-width: 0; display: flex; flex-direction: column; border-left: 1px solid #6a6a6a; border-top: 1px solid #6a6a6a; }
.bar { height: 14px; flex: none; display: flex; align-items: center; padding: 0 3px 0 4px; gap: 5px; }
.view-bar { height: 13px; }
.view-bar .menu { gap: 6px; }
.icons { margin-left: auto; display: flex; gap: 2px; color: #222; }
.faint { opacity: .25; }
.icons .look { width: 22px; }
.icons .cone { margin-right: 6px; }
.icons .lockic { margin-left: 4px; }
.viewport { flex: 1; min-height: 0; position: relative; border: 1px solid #a8a8a8; background: linear-gradient(#848484, #7e7e7e 35%, #5a5a5a); overflow: hidden; margin-right: 2px; }
.scene { width: 100%; height: 100%; }
.minor { stroke: #000; stroke-opacity: .19; }
.major { stroke: #000; stroke-opacity: .36; }
.view-name { position: absolute; left: 1px; top: 1px; padding: 0 2px; line-height: 10px; background: #6c6c6c; color: #c2c2c2; }

.timeline, .range { height: 16px; display: flex; align-items: center; margin: 2px 2px 0 0; gap: 2px; flex: none; }
.timeline .grip, .range .grip { width: 4px; height: 12px; }
.ruler { flex: 1; height: 16px; background: #3c3c3c; position: relative; padding: 0 51px 2px 3px; }
.playhead { position: absolute; left: 0; top: 0; width: 7px; height: 9px; background: #4cc486; }
.marks { display: flex; height: 100%; }
.marks div { flex: 1; position: relative; background: repeating-linear-gradient(to right, #999 0 1px, transparent 1px 20%) left bottom / 100% 3px no-repeat; }
.marks span { position: absolute; left: -8px; width: 16px; text-align: center; line-height: 8px; color: #b5b5b5; }
.marks div:first-child span { left: 2px; width: 8px; color: #4cc486; }
.range { margin-top: 2px; height: 15px; }
.spin { position: relative; height: 11px; background: #3a3a3a; display: flex; }
.spin input { width: 100%; min-width: 0; padding-left: 3px; line-height: 11px; color: #b8b8b8; }
.spin::after { content: ""; position: absolute; right: 2px; top: 3px; width: 3px; height: 5px; background: linear-gradient(#aaa 0 2px, transparent 2px 3px, #aaa 3px); }
.range .spin { width: 44px; }
.slider { flex: 1; margin-left: 2px; height: 10px; line-height: 10px; border-radius: 2px; background: linear-gradient(#606060, #787878); color: #464646; }
.slider i { color: #ccc; margin: 0 4px; font-size: 6px; }

.lower { height: 73px; flex: none; display: flex; border-top: 1px solid #666; margin-top: 4px; }
.materials { flex: 1; }
.materials .bar { height: 15px; border-bottom: 1px solid #5e5e5e; }
.coords { width: 205px; border-left: 1px solid #666; padding: 17px 4px 0 1px; display: grid; grid-template-columns: 8px 56px 8px 56px 10px 1fr; gap: 2px 1px; align-content: start; }
.coords label { line-height: 11px; color: #b5b5b5; }
.coords .spin { background: #464646; border: 1px solid #3f3f3f; }
.coords .spin input { color: #6f6f6f; line-height: 9px; }
.coords .spin::after { opacity: .5; top: 2px; }
.coords .combo { width: 100%; opacity: .6; }
.coords .combo, .coords .pill { margin-top: 2px; }
.c2 { grid-column: 2; } .c4 { grid-column: 4; } .c6 { grid-column: 5 / 7; margin-left: 6px; }
.pill { height: 11px; line-height: 11px; border-radius: 5px; background: linear-gradient(#828282, #6a6a6a); color: #c8c8c8; text-align: center; }

.status { height: 15px; flex: none; display: flex; align-items: center; gap: 6px; padding-left: 3px; border-top: 2px solid #5a5a5a; }

.right { width: 404px; flex: none; padding-top: 2px; display: flex; flex-direction: column; border-left: 2px solid #595959; }
.pane { display: flex; }
.objects { height: 325px; flex: none; border-bottom: 1px solid #606060; margin-bottom: 1px; }
.attrs { flex: 1; min-height: 0; }
.pane-main { flex: 1; min-width: 0; display: flex; flex-direction: column; border-top: 1px solid #606060; border-right: 1px solid #606060; }
.pane .bar { border-bottom: 1px solid #606060; height: 15px; }
.tree-area { flex: 1; margin-left: 27px; border-left: 1px solid #5a5a5a; }
.vtabs { width: 14px; display: flex; flex-direction: column; padding-left: 1px; gap: 1px; }
.vtabs button { writing-mode: vertical-rl; padding: 4px 0; background: #414141; color: #777; line-height: 12px; text-align: left; }
.vtabs .cur { background: #6e6e6e; color: #e0a04c; }

.tabs { display: flex; margin: 17px 3px 0 0; height: 11px; flex: none; justify-content: flex-end; gap: 1px; }
.tabs button { width: 64px; background: #696969; color: #c4c4c4; line-height: 11px; white-space: nowrap; }
.strip { height: 11px; background: #3c3c3c; margin: 4px 3px 2px 8px; flex: none; }
.unit { height: 28px; padding-left: 112px; flex: none; }
.sect { border-top: 1px solid #606060; margin: 0 3px 0 6px; flex: none; }
.fields { display: grid; grid-template-columns: 232px 44px; row-gap: 2px; align-content: start; color: #b5b5b5; }
.fields label { line-height: 11px; display: flex; padding-left: 153px; white-space: nowrap; overflow: hidden; }
.fields label::after { content: ". . . . . . . . . . . ."; flex: 1; width: 0; overflow: hidden; direction: rtl; margin: 0 3px 0 2px; }
.sect.fields { padding-top: 3px; height: 44px; }
.sect.lod { height: 18px; padding-top: 2px; }
.sect.uses { height: 41px; padding-top: 2px; row-gap: 1px; }
.lod label::after { content: none; }
.s1 { height: 29px; } .s2 { height: 18px; }
input[type=checkbox] { appearance: none; width: 8px; height: 8px; background: #6d6d6d; border-radius: 2px; align-self: center; position: relative; }
input[type=checkbox]:checked { background: #333; }
input[type=checkbox]:checked::after { content: "✔"; position: absolute; left: 0; top: -2px; font: 9px/10px "DejaVu Sans", sans-serif; color: #e4e4e4; }
.node { height: 17px; display: flex; align-items: center; gap: 3px; padding-left: 10px; }
.presets { padding: 2px 3px; display: flex; gap: 10px; }
.presets .pill { width: 60px; }

.mini { position: absolute; left: 418px; top: 250px; width: 107px; height: 96px; background: #3a3a3a; box-shadow: 0 0 5px rgba(0,0,0,.5); }
.mini-title { height: 20px; background: #e9e9e9; display: flex; justify-content: flex-end; align-items: center; padding-top: 2px; }
.mini-title span { width: 13px; height: 13px; background: #ccc; }
.mini-body { display: flex; flex-direction: column; gap: 3px; padding: 5px 1px; }
.mini-body i { width: 8px; height: 10px; background: #5b5250; }
.mini-body .lit { background: #9fb2d0; } .mini-body .red { background: #8a4a3a; }

.dialog { position: absolute; left: 423px; top: 270px; width: 630px; height: 355px; background: #ebebeb; color: #484848; border: 1px solid #5893a9; box-shadow: 0 3px 10px rgba(0,0,0,.5); display: flex; flex-direction: column; }
.d-title { height: 19px; display: flex; align-items: center; gap: 4px; padding: 0 4px 0 5px; }
.d-title button { margin-left: auto; }
.d-nav { height: 23px; display: flex; align-items: center; padding: 0 8px 0 7px; gap: 5px; }
.arrows { display: flex; align-items: center; width: 59px; justify-content: space-between; color: #444; }
.off { color: #c4c4c4; } .flip { transform: scaleX(-1); } .up { transform: rotate(90deg); } .tiny { width: 5px; }
.path { flex: 1; height: 15px; border: 1px solid #d2d2d2; display: flex; align-items: center; gap: 5px; }
.path i { width: 4px; text-align: center; }
.path a { color: inherit; text-decoration: none; }
.path .drop { margin-left: auto; width: 8px; margin-right: -3px; }
.path button { border-left: 1px solid #d2d2d2; height: 13px; padding: 0 3px; }
.path button .ic { width: 8px; }
.search { width: 134px; height: 15px; margin-left: 2px; border: 1px solid #d2d2d2; display: flex; align-items: center; padding: 0 4px 0 5px; }
.search input { flex: 1; min-width: 0; }
.search input::placeholder { color: #777; opacity: 1; }
.mirror { transform: scaleX(-1); }
.d-tools { height: 22px; background: #dfe1e6; display: flex; align-items: center; padding: 0 9px 0 11px; color: #42506a; }
.d-tools .org { display: flex; align-items: center; gap: 3px; margin-right: 18px; }
.grow { flex: 1; }
.tri { width: 5px; height: 5px; color: #2c3444; }
.wide-ic + .tri { margin: 0 15px 0 7px; }
.d-tools .help { width: 11px; height: 11px; margin-left: 13px; border-radius: 50%; background: #1763ad; color: #fff; font-weight: 700; line-height: 11px; }
.d-body { flex: 1; display: flex; min-height: 0; }
.nav-tree { list-style: none; margin: 0; padding: 5px 0 0; width: 224px; }
.nav-tree li { height: 16px; line-height: 16px; display: flex; align-items: center; gap: 3px; padding-left: 21px; }
.nav-tree .root { padding-left: 16px; }
.nav-tree .cur { background: #c9c9c9; }
.vscroll { width: 11px; background: #e0e0e0; display: flex; flex-direction: column; align-items: center; padding: 1px 0; color: #444; }
.vscroll .ic { width: 7px; } .up-chev { transform: rotate(180deg); }
.vscroll .track { flex: 1; width: 10px; padding-top: 85px; }
.vscroll .track i { display: block; height: 96px; background: #bfbfbf; }
.files { flex: 1; display: flex; flex-direction: column; justify-content: space-between; padding-left: 12px; min-width: 0; }
table { border-collapse: collapse; table-layout: fixed; width: 100%; }
.w-name { width: 171px; } .w-date { width: 80px; } .w-type { width: 80px; }
th, td { padding: 0 0 0 5px; text-align: left; font-weight: 400; white-space: nowrap; height: 14px; line-height: 14px; color: #777; }
th { height: 17px; color: #5a6478; position: relative; border-right: 1px solid #dcdcdc; }
th:last-child { border: 0; padding-left: 4px; }
th:first-child { padding-left: 2px; }
thead::after { content: ""; display: block; height: 3px; }
td:first-child { color: #484848; display: flex; align-items: center; gap: 3px; padding-left: 3px; }
td:last-child { text-align: right; padding-right: 1px; }
tr.cur { background: #b9d4ea; outline: 1px solid #9fc6e4; outline-offset: -1px; }
.sort { position: absolute; left: 82px; top: -3px; width: 7px; transform: rotate(180deg); }
.hscroll { height: 10px; display: flex; align-items: center; color: #444; background: #e5e5e5; margin-left: -9px; padding: 0 2px; gap: 2px; }
.hscroll .ic { width: 8px; } .l { transform: rotate(90deg); } .r { transform: rotate(-90deg); }
.hscroll .track { flex: 1; height: 9px; padding-right: 10px; }
.hscroll i { display: block; height: 100%; background: #bfbfbf; }
.d-foot { height: 51px; flex: none; background: #dddddd; display: grid; grid-template-columns: 122px 1fr 125px; column-gap: 4px; row-gap: 4px; padding: 7px 11px 8px 0; align-items: center; }
.d-foot label { text-align: right; }
.fname, .ftype { height: 15px; border: 1px solid #8c8c8c; background: #ebebeb; display: flex; align-items: center; padding: 0 2px; }
.fname input, .ftype select { flex: 1; min-width: 0; appearance: none; }
.fname .ic, .ftype .ic { width: 8px; height: 8px; color: #666; }
.fname { margin-right: 4px; }
.ftype { background: #d2d2d2; border-color: #aaa; }
.d-btns { grid-column: 2 / 4; display: flex; justify-content: flex-end; gap: 9px; }
.d-btns button { width: 58px; height: 16px; border: 1px solid #a8a8a8; background: #d2d2d2; }
.d-btns .primary { border-color: #2a6fb4; box-shadow: inset 0 0 0 1px #7ab0e0; }
.resize { position: absolute; right: 1px; bottom: 1px; width: 6px; height: 6px; background: radial-gradient(#aaa 40%, transparent 50%) 0 0 / 2px 2px; clip-path: polygon(100% 0, 100% 100%, 0 100%); }
.cursor { position: absolute; left: 272px; top: 116px; width: 10px; height: 14px; }
```
FILE: script.js
```js
// Perspective floor grid, seen along its diagonal.
(function () {
  var NS = "http://www.w3.org/2000/svg";
  var grid = document.getElementById("grid");
  var HORIZON = -50, CENTER = 422, FAR = 26, NEAR = -16;

  function project(i, j) {
    var depth = (i + j) / 2;
    var drop = 1 / (0.008299 + 0.0004947 * depth);
    return [CENTER + 0.4477 * (i - j) / 2 * drop, HORIZON + drop];
  }

  function line(a, b, cls) {
    var el = document.createElementNS(NS, "line");
    el.setAttribute("x1", a[0].toFixed(1));
    el.setAttribute("y1", a[1].toFixed(1));
    el.setAttribute("x2", b[0].toFixed(1));
    el.setAttribute("y2", b[1].toFixed(1));
    el.setAttribute("class", cls);
    grid.appendChild(el);
  }

  for (var c = -56; c <= FAR; c++) {
    var cls = c % 10 === 0 ? "major" : "minor";
    var near = 2 * NEAR - c;
    line(project(c, near), project(c, FAR), cls);
    line(project(near, c), project(FAR, c), cls);
  }

  // Frame ruler: one cell for every five frames.
  var marks = document.getElementById("marks");
  for (var f = 0; f < 90; f += 5) {
    var cell = document.createElement("div");
    if (f <= 40) {
      var label = document.createElement("span");
      label.textContent = f;
      cell.appendChild(label);
    }
    marks.appendChild(cell);
  }
})();
```
